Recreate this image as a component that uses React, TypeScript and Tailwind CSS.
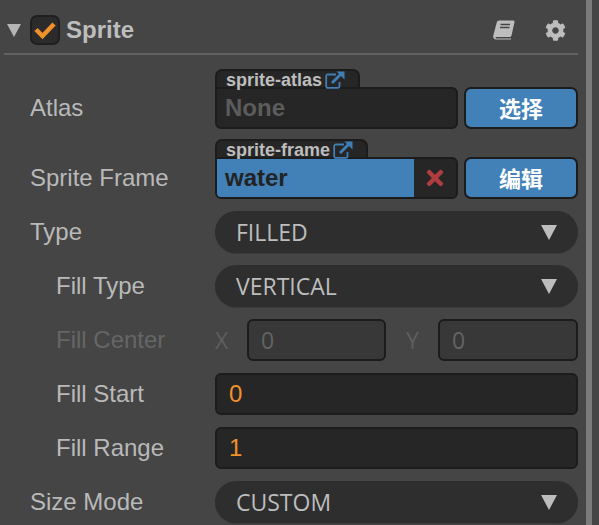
import { FunctionComponent, ReactNode } from "react";
import { FaCog, FaTimes } from "react-icons/fa";

const LinkIcon = () => (
  <svg width="20" height="18" viewBox="0 0 20 18" fill="none" className="text-[#3f7fb6]">
    <path d="M11 3.500H3A1.500 1.500 0 0 0 1.200 5V15.200A1.500 1.500 0 0 0 3 16.800H13a1.500 1.500 0 0 0 1.500-1.600v-4.200" stroke="currentColor" strokeWidth="1.800" />
    <path d="M7 12 16 3" stroke="currentColor" strokeWidth="2.800" />
    <path d="M11.500 .5h8v8z" fill="currentColor" />
  </svg>
);

const BookIcon = () => (
  <svg width="22" height="20" viewBox="0 0 22 20">
    <path d="M6 0.500h14a1.500 1.500 0 0 1 1.500 1.800L18.500 15.500a2 2 0 0 1-2 1.500H3.500c-1.200 0-1.500 1.600 0 1.600h13.500l1-.6-.2 1.500H3C.8 19.500-.3 17.500.3 15.500L3.800 2.200A2.300 2.300 0 0 1 6 .5z" fill="#bdbdbd" />
    <path d="M7.500 4.500h9.500M7 7.500h9.500" stroke="#454545" strokeWidth="1.300" />
  </svg>
);

const Caret = () => (
  <svg width="16" height="15" viewBox="0 0 16 15" className="shrink-0">
    <path d="M0 0h16L8 15z" fill="#bdbdbd" />
  </svg>
);

const Label: FunctionComponent<{ text: string; sub?: boolean; dim?: boolean }> = ({ text, sub, dim }) => (
  <div
    className={`w-[185px] shrink-0 text-[24px] leading-[42px] ${sub ? "pl-[26px]" : ""} ${dim ? "text-[#666666]" : "text-[#b9b9b9]"}`}
  >
    {text}
  </div>
);

const Select: FunctionComponent<{ label: string; value: string; sub?: boolean }> = ({ label, value, sub }) => (
  <div className="flex h-[42px]">
    <Label text={label} sub={sub} />
    <div className="flex flex-1 items-center justify-between rounded-[21px] bg-[#2e2e2e] pl-[21px] pr-[21px] shadow-[0_1px_0_#3a3a3a] [font-family:'Open_Sans',sans-serif] text-[23px] text-[#bdbdbd]">
      <span>{value}</span>
      <Caret />
    </div>
  </div>
);

const NumberField: FunctionComponent<{ label: string; value: string }> = ({ label, value }) => (
  <div className="flex h-[42px]">
    <Label text={label} sub />
    <div className="flex flex-1 items-center rounded-[6px] border-2 border-[#1c1c1c] bg-[#262626] pl-[12px] text-[24px] text-[#f0912a]">
      {value}
    </div>
  </div>
);

const Tab: FunctionComponent<{ children: ReactNode; width: string }> = ({ children, width }) => (
  <div
    className={`${width} flex h-[20px] items-center gap-[3px] rounded-t-[7px] border-x-2 border-t-2 border-[#1c1c1c] bg-[#262626] pl-[9px] text-[18px] leading-none font-bold text-[#bdbdbd]`}
  >
    {children}
    <LinkIcon />
  </div>
);

const Button: FunctionComponent<{ text: string }> = ({ text }) => (
  <div className="flex h-[42px] w-[114px] shrink-0 items-center justify-center rounded-[7px] border-2 border-[#1c1c1c] bg-[#4281b8] pb-[2px] text-[22px] font-bold text-white [font-family:'Noto_Sans_CJK_SC',sans-serif]">
    {text}
  </div>
);

const DisabledInput: FunctionComponent<{ axis: string; value: string; width: string }> = ({ axis, value, width }) => (
  <div className={`${width} flex items-center gap-[16px]`}>
    <span className="w-[16px] [font-family:'Open_Sans',sans-serif] text-[23px] text-[#5e5e5e]">{axis}</span>
    <div className="flex h-[42px] flex-1 items-center rounded-[6px] border-2 border-[#1c1c1c] bg-[#383838] pl-[12px] [font-family:'Open_Sans',sans-serif] text-[23px] text-[#636363]">
      {value}
    </div>
  </div>
);

const App = () => {
  return (
    <div className="flex h-[525px] w-[599px] overflow-hidden bg-[#454545] [font-family:'Liberation_Sans',sans-serif]">
      <div className="w-[586px] shrink-0 pr-[8px]">
        <div className="ml-[4px] flex h-[55px] items-center border-b-2 border-[#626262] pt-[7px]">
          <svg width="14" height="13" viewBox="0 0 14 13" className="ml-[3px] shrink-0">
            <path d="M0 0h14L7 13z" fill="#b5b5b5" />
          </svg>
          <div className="ml-[9px] flex h-[30px] w-[30px] shrink-0 items-center justify-center rounded-[7px] border-2 border-[#1f1f1f] bg-[#2b2b2b]">
            <svg width="22" height="18" viewBox="0 0 22 18" fill="none">
              <path d="M2 8.500 8.500 15 20 3" stroke="#f0912a" strokeWidth="4.500" />
            </svg>
          </div>
          <span className="ml-[6px] text-[24px] font-bold text-[#bdbdbd]">Sprite</span>
          <div className="ml-auto mr-[12px] flex items-center gap-[30px]">
            <BookIcon />
            <FaCog size={21} color="#bdbdbd" />
          </div>
        </div>
        <div className="flex flex-col gap-[12px] pt-[14px] pl-[30px]">
          <div className="flex flex-col gap-[10px]">
            <div className="flex items-end">
              <Label text="Atlas" />
              <div className="flex flex-1 gap-[6px]">
                <div className="flex-1">
                  <Tab width="w-[145px]">sprite-atlas</Tab>
                  <div className="-mt-[2px] flex h-[42px] items-center rounded-[6px] rounded-tl-none border-2 border-[#1c1c1c] bg-[#262626] pl-[8px] text-[24px] font-bold text-[#5c5c5c]">
                    None
                  </div>
                </div>
                <div className="mt-[18px]">
                  <Button text="选择" />
                </div>
              </div>
            </div>
            <div className="flex items-end">
              <Label text="Sprite Frame" />
              <div className="flex flex-1 gap-[6px]">
                <div className="flex-1">
                  <Tab width="w-[153px]">sprite-frame</Tab>
                  <div className="-mt-[2px] flex h-[42px] overflow-hidden rounded-[6px] rounded-tl-none border-2 border-[#1c1c1c] bg-[#262626]">
                    <div className="flex flex-1 items-center bg-[#4281b8] pl-[8px] text-[24px] font-bold text-[#232323]">
                      water
                    </div>
                    <div className="flex w-[42px] items-center justify-center">
                      <FaTimes size={24} color="#b03c40" />
                    </div>
                  </div>
                </div>
                <div className="mt-[18px]">
                  <Button text="编辑" />
                </div>
              </div>
            </div>
          </div>
          <Select label="Type" value="FILLED" />
          <Select label="Fill Type" value="VERTICAL" sub />
          <div className="flex h-[42px]">
            <Label text="Fill Center" sub dim />
            <div className="flex flex-1 gap-[20px]">
              <DisabledInput axis="X" value="0" width="w-[171px]" />
              <DisabledInput axis="Y" value="0" width="flex-1" />
            </div>
          </div>
          <NumberField label="Fill Start" value="0" />
          <NumberField label="Fill Range" value="1" />
          <Select label="Size Mode" value="CUSTOM" />
        </div>
      </div>
      <div className="h-full w-[6px] shrink-0 bg-[#7b7b7b]" />
    </div>
  );
};

export default App;
